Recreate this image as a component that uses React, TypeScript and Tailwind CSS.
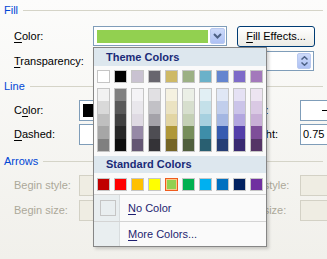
import React from 'react';

const themeTop = [
  'bg-[#ffffff]', 'bg-[#000000]', 'bg-[#c9c2d1]', 'bg-[#68666e]', 'bg-[#ceb966]',
  'bg-[#9cb084]', 'bg-[#6bb1c9]', 'bg-[#6585cf]', 'bg-[#7e6bc9]', 'bg-[#a379bb]',
];

const shades: string[][] = [
  ['bg-[#f2f2f2]', 'bg-[#d9d9d9]', 'bg-[#bfbfbf]', 'bg-[#a6a6a6]', 'bg-[#808080]'],
  ['bg-[#808080]', 'bg-[#595959]', 'bg-[#404040]', 'bg-[#262626]', 'bg-[#0d0d0d]'],
  ['bg-[#f4f3f6]', 'bg-[#e9e7ec]', 'bg-[#dfdae3]', 'bg-[#9689a6]', 'bg-[#645773]'],
  ['bg-[#e1e0e3]', 'bg-[#c2c1c6]', 'bg-[#a4a2a9]', 'bg-[#4e4d53]', 'bg-[#343337]'],
  ['bg-[#f5f1e0]', 'bg-[#ebe3c2]', 'bg-[#e2d5a3]', 'bg-[#af9738]', 'bg-[#756525]'],
  ['bg-[#ebefe6]', 'bg-[#d7dfce]', 'bg-[#c4d0b5]', 'bg-[#768d5a]', 'bg-[#4f5e3c]'],
  ['bg-[#e1eff4]', 'bg-[#c4e0e9]', 'bg-[#a6d0df]', 'bg-[#3e8ea9]', 'bg-[#295f71]'],
  ['bg-[#e0e7f5]', 'bg-[#c1ceec]', 'bg-[#a3b6e2]', 'bg-[#375bb0]', 'bg-[#253d75]'],
  ['bg-[#e5e1f4]', 'bg-[#cbc4e9]', 'bg-[#b2a6df]', 'bg-[#533ea9]', 'bg-[#382971]'],
  ['bg-[#ede4f1]', 'bg-[#dac9e4]', 'bg-[#c8afd6]', 'bg-[#7e4e99]', 'bg-[#543466]'],
];

const cellHeights = ['h-[12px]', 'h-[13px]', 'h-[12px]', 'h-[13px]', 'h-[12px]'];

const standard = [
  'bg-[#c00000]', 'bg-[#ff0000]', 'bg-[#ffc000]', 'bg-[#ffff00]', 'bg-[#92d050]',
  'bg-[#00b050]', 'bg-[#00b0f0]', 'bg-[#0070c0]', 'bg-[#002060]', 'bg-[#7030a0]',
];

function U({ children }: { children: React.ReactNode }) {
  return <span className="underline underline-offset-[2px] decoration-1">{children}</span>;
}

function GroupHeader({ title }: { title: string }) {
  return (
    <div className="flex items-center h-[14px] pl-[4px]">
      <span className="text-[#0046d5]">{title}</span>
      <div className="flex-1 h-px bg-[#d5d4c8] ml-[5px] mr-[4px]" />
    </div>
  );
}

function Chevron() {
  return (
    <svg width="9" height="6" viewBox="0 0 9 6">
      <path d="M1 1 L4.5 4.5 L8 1" fill="none" stroke="#4d6185" strokeWidth="2" />
    </svg>
  );
}

export default function App() {
  return (
    <div className="relative w-[327px] h-[259px] overflow-hidden bg-gradient-to-b from-[#fcfcfb] to-[#f1f0eb] font-['Liberation_Sans',Arial,sans-serif] text-[11px] leading-none text-black">
      {/* Fill */}
      <div className="mt-[3px]">
        <GroupHeader title="Fill" />
      </div>
      <div className="flex items-center h-[22px] mt-[8px]">
        <div className="shrink-0 w-[93px] pl-[14px]">
          <U>C</U>olor:
        </div>
        <div className="shrink-0 w-[134px] h-[20px] border border-[#7f9db9] bg-white flex items-center pl-[3px] pr-px">
          <div className="w-[111px] h-[13px] bg-[#92d050]" />
          <div className="ml-auto w-[15px] h-[16px] rounded-[2px] border border-[#b9c9ef] bg-gradient-to-b from-[#cddaf9] to-[#aec1f4] flex items-center justify-center">
            <Chevron />
          </div>
        </div>
        <div className="shrink-0 ml-[10px] w-[78px] h-[21px] rounded-[3px] border border-[#003c74] bg-gradient-to-b from-white to-[#ecebe5] flex items-center justify-center">
          <span>
            <U>F</U>ill Effects...
          </span>
        </div>
      </div>
      <div className="flex items-center h-[22px] mt-[3px]">
        <div className="shrink-0 w-[93px] pl-[14px]">
          <U>T</U>ransparency:
        </div>
        <div className="shrink-0 w-[140px] h-[20px]" />
        <div className="shrink-0 ml-[7px] w-[74px] h-[20px] border border-[#7f9db9] bg-white flex items-center pl-[3px] pr-[2px]">
          <span>0 %</span>
          <div className="ml-auto w-[14px] h-[16px] rounded-[2px] border border-[#b9c9ef] bg-gradient-to-b from-[#cddaf9] to-[#aec1f4] flex flex-col items-center justify-center gap-[2px]">
            <svg width="7" height="4" viewBox="0 0 7 4">
              <path d="M0.5 3.5 L3.5 0.8 L6.5 3.5" fill="none" stroke="#4d6185" strokeWidth="1.5" />
            </svg>
            <svg width="7" height="4" viewBox="0 0 7 4">
              <path d="M0.5 0.5 L3.5 3.2 L6.5 0.5" fill="none" stroke="#4d6185" strokeWidth="1.5" />
            </svg>
          </div>
        </div>
      </div>

      {/* Line */}
      <div className="mt-[7px]">
        <GroupHeader title="Line" />
      </div>
      <div className="flex items-center h-[21px] mt-[7px]">
        <div className="shrink-0 w-[79px] pl-[14px]">
          C<U>o</U>lor:
        </div>
        <div className="shrink-0 w-[120px] h-[21px] border border-[#7f9db9] bg-white flex items-center pl-[3px]">
          <div className="w-[30px] h-[13px] bg-black" />
        </div>
        <div className="shrink-0 ml-[42px] w-[59px]">
          <U>S</U>tyle:
        </div>
        <div className="shrink-0 w-[60px] h-[21px] border border-[#7f9db9] bg-white flex items-center pl-[21px]">
          <div className="shrink-0 w-[20px] h-px bg-black" />
        </div>
      </div>
      <div className="flex items-center h-[21px] mt-[3px]">
        <div className="shrink-0 w-[79px] pl-[14px]">
          <U>D</U>ashed:
        </div>
        <div className="shrink-0 w-[120px] h-[21px] border border-[#7f9db9] bg-white" />
        <div className="shrink-0 ml-[42px] w-[59px]">
          <U>W</U>eight:
        </div>
        <div className="shrink-0 w-[60px] h-[21px] border border-[#7f9db9] bg-white flex items-center pl-[2px]">
          <span className="whitespace-nowrap">0.75 pt</span>
        </div>
      </div>

      {/* Arrows */}
      <div className="mt-[9px]">
        <GroupHeader title="Arrows" />
      </div>
      <div className="flex items-center h-[21px] mt-[7px] text-[#aca899]">
        <div className="shrink-0 w-[79px] pl-[14px]">Begin style:</div>
        <div className="shrink-0 w-[120px] h-[21px] border border-[#d3d1c5] bg-[#efede3]" />
        <div className="shrink-0 ml-[42px] w-[59px] whitespace-nowrap">End style:</div>
        <div className="shrink-0 w-[60px] h-[21px] border border-[#d3d1c5] bg-[#efede3]" />
      </div>
      <div className="flex items-center h-[21px] mt-[4px] text-[#aca899]">
        <div className="shrink-0 w-[79px] pl-[14px]">Begin size:</div>
        <div className="shrink-0 w-[120px] h-[21px] border border-[#d3d1c5] bg-[#efede3]" />
        <div className="shrink-0 ml-[42px] w-[59px] whitespace-nowrap">End size:</div>
        <div className="shrink-0 w-[60px] h-[21px] border border-[#d3d1c5] bg-[#efede3]" />
      </div>

      {/* Color dropdown menu */}
      <div className="absolute left-[93px] top-[47px] w-[174px] h-[200px] border border-[#868686] bg-[#fafafa] shadow-[2px_2px_3px_rgba(0,0,0,0.18)] flex flex-col">
        <div className="h-[18px] bg-[#dde7ee] flex items-center pl-[12px] font-bold text-[#1a2b78]">
          Theme Colors
        </div>
        <div className="mt-[4px] flex gap-[4px] pl-[3px]">
          {themeTop.map((c, i) => (
            <div key={i} className={`w-[13px] h-[13px] border border-[#c5c5c5] ${c}`} />
          ))}
        </div>
        <div className="mt-[5px] flex gap-[4px] pl-[3px]">
          {shades.map((col, i) => (
            <div key={i} className="w-[13px] h-[64px] border border-[#c5c5c5] flex flex-col">
              {col.map((c, j) => (
                <div key={j} className={`w-full ${cellHeights[j]} ${c}`} />
              ))}
            </div>
          ))}
        </div>
        <div className="mt-[4px] h-[17px] bg-[#dde7ee] flex items-center pl-[12px] font-bold text-[#1a2b78]">
          Standard Colors
        </div>
        <div className="mt-[5px] flex gap-[4px] pl-[3px]">
          {standard.map((c, i) =>
            i === 4 ? (
              <div key={i} className="w-[13px] h-[13px] border border-[#ef5b1d] p-px bg-[#fbc98a]">
                <div className={`w-full h-full ${c}`} />
              </div>
            ) : (
              <div key={i} className={`w-[13px] h-[13px] border border-[#c5c5c5] ${c}`} />
            ),
          )}
        </div>
        <div className="mt-[3px] h-px bg-[#d4d4d4]" />
        <div className="flex h-[26px]">
          <div className="w-[26px] bg-[#e9eef0] border-r border-[#d8dcde] flex items-center pl-[6px]">
            <div className="w-[16px] h-[16px] border border-[#c5c5c5]" />
          </div>
          <div className="flex items-center pl-[8px] text-[#1e1e70]">
            <span>
              <U>N</U>o Color
            </span>
          </div>
        </div>
        <div className="h-px bg-[#d4d4d4]" />
        <div className="flex h-[24px]">
          <div className="w-[26px] bg-[#e9eef0] border-r border-[#d8dcde]" />
          <div className="flex items-center pl-[8px] text-[#1e1e70]">
            <span>
              <U>M</U>ore Colors...
            </span>
          </div>
        </div>
      </div>
    </div>
  );
}
